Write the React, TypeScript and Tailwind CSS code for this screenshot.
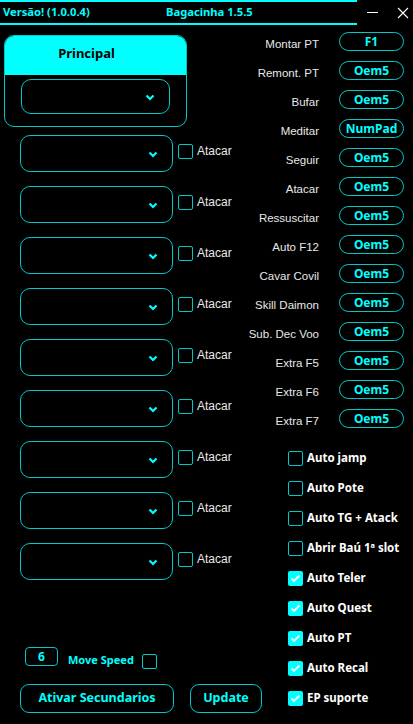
import { useState } from "react";

const hotkeys = [
    { label: "Montar PT", key: "F1" },
    { label: "Remont. PT", key: "Oem5" },
    { label: "Bufar", key: "Oem5" },
    { label: "Meditar", key: "NumPad" },
    { label: "Seguir", key: "Oem5" },
    { label: "Atacar", key: "Oem5" },
    { label: "Ressuscitar", key: "Oem5" },
    { label: "Auto F12", key: "Oem5" },
    { label: "Cavar Covil", key: "Oem5" },
    { label: "Skill Daimon", key: "Oem5" },
    { label: "Sub. Dec Voo", key: "Oem5" },
    { label: "Extra F5", key: "Oem5" },
    { label: "Extra F6", key: "Oem5" },
    { label: "Extra F7", key: "Oem5" },
];

const options = [
    { label: "Auto jamp", on: false },
    { label: "Auto Pote", on: false },
    { label: "Auto TG + Atack", on: false },
    { label: "Abrir Baú 1ª slot", on: false },
    { label: "Auto Teler", on: true },
    { label: "Auto Quest", on: true },
    { label: "Auto PT", on: true },
    { label: "Auto Recal", on: true },
    { label: "EP suporte", on: true },
];

const bold = "font-['Noto_Sans',sans-serif] font-bold";
const plain = "font-['Liberation_Sans',Arial,sans-serif]";

function Chevron() {
    return (
        <svg width="10" height="7" viewBox="0 0 10 7" className="text-[#00ffff]">
            <path d="M1.5 1.5 L5 5 L8.5 1.5" fill="none" stroke="currentColor" strokeWidth="2.2" />
        </svg>
    );
}

function Dropdown({ className }: { className: string }) {
    return (
        <div className={`shrink-0 flex items-center justify-end pr-[14px] pt-[2px] border border-[#00c8c8] rounded-[10px] ${className}`}>
            <Chevron />
        </div>
    );
}

function CheckBox({ on, onClick }: { on: boolean; onClick?: () => void }) {
    return (
        <div
            onClick={onClick}
            className={`shrink-0 w-[15px] h-[15px] rounded-[2px] flex items-center justify-center ${on ? "bg-[#00ffff]" : "border border-[#00c8c8]"}`}
        >
            {on && (
                <svg width="11" height="9" viewBox="0 0 11 9">
                    <path d="M1.5 4.5 L4 7 L9.5 1.5" fill="none" stroke="white" strokeWidth="1.8" />
                </svg>
            )}
        </div>
    );
}

export default function App() {
    const [checks, setChecks] = useState(options.map((o) => o.on));

    return (
        <div className="w-[413px] h-[724px] bg-black flex flex-col overflow-hidden select-none">
            {/* title bar */}
            <div className="flex h-[25px]">
                <div className={`w-[357px] h-[25px] border-t-2 border-b-2 border-[#00ffff] flex items-center text-[11.2px] text-[#00ffff] ${bold}`}>
                    <span className="ml-[3px] w-[163px]">Versão! (1.0.0.4)</span>
                    <span>Bagacinha 1.5.5</span>
                </div>
                <div className="flex-1 flex items-start pt-[7px]">
                    <div className="ml-[10px] mt-[5px] w-[11px] h-[1px] bg-white" />
                    <svg width="12" height="12" viewBox="0 0 12 12" className="ml-[19px]">
                        <path d="M1 1 L11 11 M11 1 L1 11" stroke="white" strokeWidth="1.1" />
                    </svg>
                </div>
            </div>

            <div className="flex flex-1">
                {/* left column */}
                <div className="w-[240px] shrink-0 flex flex-col">
                    <div className="ml-[4px] mt-[10px] w-[183px] h-[92px] rounded-[10px] border border-[#00c8c8] overflow-hidden">
                        <div className={`h-[39px] bg-[#00ffff] flex items-center justify-center pr-[18px] pb-[4px] text-[13px] text-black ${bold}`}>
                            Principal
                        </div>
                        <Dropdown className="ml-[16px] mt-[4px] w-[149px] h-[35px]" />
                    </div>

                    <div className="flex flex-col gap-[14px] mt-[8px]">
                        {Array.from({ length: 9 }).map((_, i) => (
                            <div key={i} className="flex items-center h-[37px]">
                                <Dropdown className="ml-[20px] w-[153px] h-[37px]" />
                                <div className="ml-[5px] mb-[5px] flex items-center">
                                    <CheckBox on={false} />
                                    <span className={`ml-[4px] text-[12px] text-[#e8e8e8] ${plain}`}>Atacar</span>
                                </div>
                            </div>
                        ))}
                    </div>

                    <div className="flex items-center mt-[64px]">
                        <div className={`ml-[25px] w-[33px] h-[19px] border border-[#00c8c8] rounded-[4px] flex items-center justify-center text-[12px] text-[#00ffff] ${bold}`}>
                            6
                        </div>
                        <span className={`ml-[10px] mt-[8px] text-[11px] text-[#00ffff] ${bold}`}>Move Speed</span>
                        <div className="ml-[8px] mt-[10px] w-[15px] h-[15px] border border-[#00c8c8] rounded-[2px]" />
                    </div>

                    <div className="flex mt-[15px]">
                        <button className={`shrink-0 ml-[20px] w-[154px] h-[29px] border border-[#00c8c8] rounded-[9px] text-[12.5px] text-[#00ffff] ${bold}`}>
                            Ativar Secundarios
                        </button>
                        <button className={`shrink-0 ml-[16px] w-[72px] h-[29px] border border-[#00c8c8] rounded-[9px] text-[12.5px] text-[#00ffff] ${bold}`}>
                            Update
                        </button>
                    </div>
                </div>

                {/* right column */}
                <div className="flex-1 flex flex-col">
                    <div className="flex flex-col gap-[11px] mt-[7px]">
                        {hotkeys.map((h) => (
                            <div key={h.label} className="flex items-start h-[18px]">
                                <span className={`w-[79px] text-right mt-[5px] text-[11.5px] leading-[14px] text-[#e8e8e8] ${plain}`}>
                                    {h.label}
                                </span>
                                <div className={`ml-[20px] w-[65px] h-[19px] border border-[#00c8c8] rounded-full flex items-center justify-center text-[12px] text-[#00ffff] ${bold}`}>
                                    {h.key}
                                </div>
                            </div>
                        ))}
                    </div>

                    <div className="flex flex-col mt-[16px]">
                        {options.map((o, i) => (
                            <div key={o.label} className="flex items-center h-[30px] ml-[48px]">
                                <CheckBox
                                    on={checks[i]}
                                    onClick={() => setChecks(checks.map((c, j) => (j === i ? !c : c)))}
                                />
                                <span className={`ml-[4px] text-[11.5px] text-white ${bold}`}>{o.label}</span>
                            </div>
                        ))}
                    </div>
                </div>
            </div>
        </div>
    );
}
